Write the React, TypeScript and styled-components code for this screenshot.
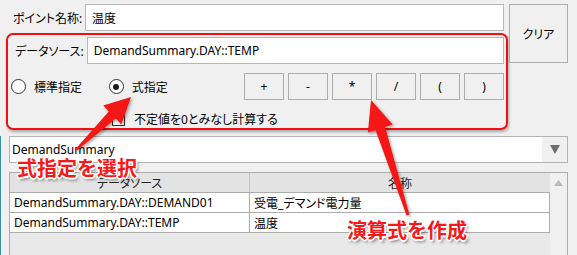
import React from "react";
import styled, { createGlobalStyle } from "styled-components";

const GlobalStyle = createGlobalStyle`
  html, body {
    margin: 0;
    padding: 0;
    background: #f0f0f0;
  }
`;

const UI_FONT = `"Noto Sans", "Noto Sans CJK JP", sans-serif`;

const rows = [
  { source: "DemandSummary.DAY::DEMAND01", name: "受電_デマンド電力量" },
  { source: "DemandSummary.DAY::TEMP", name: "温度" },
];

const operators = ["+", "-", "*", "/", "(", ")"];

const App: React.FC = () => {
  return (
    <Page>
      <GlobalStyle />

      <TopArea>
        <LeftColumn>
          <FieldRow>
            <Label>ポイント名称:</Label>
            <TextBox>温度</TextBox>
          </FieldRow>

          <GroupBox>
            <FieldRow>
              <Label>データソース:</Label>
              <TextBox>DemandSummary.DAY::TEMP</TextBox>
            </FieldRow>

            <RadioRow>
              <RadioItem width={99}>
                <RadioCircle checked={false} />
                <span>標準指定</span>
              </RadioItem>
              <RadioItem width={137}>
                <RadioCircle checked />
                <span>式指定</span>
              </RadioItem>
              <OpButtons>
                {operators.map((op) => (
                  <OpButton key={op}>{op}</OpButton>
                ))}
              </OpButtons>
            </RadioRow>

            <CheckRow>
              <CheckBox />
              <span>不定値を0とみなし計算する</span>
            </CheckRow>
          </GroupBox>
        </LeftColumn>

        <ClearButton>クリア</ClearButton>
      </TopArea>

      <LowerArea>
        <Combo>
          <ComboText>DemandSummary</ComboText>
          <ComboArrow>
            <svg width="10" height="9" viewBox="0 0 10 9">
              <polygon points="0,0 10,0 5,9" fill="#6d6d6d" />
            </svg>
          </ComboArrow>
        </Combo>

        <Grid>
          <GridBody>
            <HeaderRow>
              <HeaderCell>データソース</HeaderCell>
              <HeaderCell>名称</HeaderCell>
            </HeaderRow>
            {rows.map((r) => (
              <DataRow key={r.source}>
                <Cell>{r.source}</Cell>
                <Cell>{r.name}</Cell>
              </DataRow>
            ))}
          </GridBody>
          <ScrollBar>
            <svg width="9" height="6" viewBox="0 0 9 6">
              <polygon points="0,6 9,6 4.5,0" fill="#b9b9b9" />
            </svg>
          </ScrollBar>
        </Grid>
      </LowerArea>

      {/* annotation overlay */}
      <Overlay width="577" height="255" viewBox="0 0 577 255">
        <defs>
          <filter id="shadow" x="-20%" y="-20%" width="140%" height="140%">
            <feDropShadow dx="1.5" dy="1.5" stdDeviation="1.5" floodColor="#000" floodOpacity="0.35" />
          </filter>
        </defs>
        <polygon
          filter="url(#shadow)"
          fill="#f51515"
          points="76.7,150.7 115.8,118.6 121.3,124.4 131,97 103.3,105.6 108.8,111.4 75.3,149.3"
        />
        <polygon
          filter="url(#shadow)"
          fill="#f51515"
          points="409.4,214.5 385.1,127 392.7,124.5 371,100 367.9,132.5 375.5,130 406.6,215.5"
        />
      </Overlay>

      <Note left={17} top={154}>式指定を選択</Note>
      <Note left={347} top={216}>演算式を作成</Note>
    </Page>
  );
};

/* ================== STYLED COMPONENTS ================== */

const Page = styled.div`
  position: relative;
  width: 577px;
  height: 255px;
  overflow: hidden;
  background: #f0f0f0;
  font-family: ${UI_FONT};
  font-size: 12px;
  color: #000;
`;

const TopArea = styled.div`
  display: flex;
  align-items: flex-start;
  padding: 4px 9px 0 6px;
`;

const LeftColumn = styled.div`
  width: 502px;
  display: flex;
  flex-direction: column;
`;

const FieldRow = styled.div`
  display: flex;
  align-items: center;
  height: 27px;
  padding-left: 7px;
`;

const Label = styled.div`
  width: 72px;
  font-size: 12px;
  font-feature-settings: "palt";
  white-space: nowrap;
`;

const TextBox = styled.div`
  box-sizing: border-box;
  width: 419px;
  height: 27px;
  border: 1px solid #b8b8b8;
  background: #fff;
  padding: 0 6px;
  display: flex;
  align-items: center;
  font-size: 12px;
`;

const GroupBox = styled.div`
  box-sizing: border-box;
  margin-top: 2px;
  height: 97px;
  border: 2px solid #f20f0f;
  border-radius: 7px;
  padding: 2px 2px 0 0;
  box-shadow: 1px 2px 3px rgba(0, 0, 0, 0.3);
`;

const RadioRow = styled.div`
  display: flex;
  align-items: center;
  margin-top: 9px;
  height: 27px;
  padding-left: 3px;
`;

const RadioItem = styled.div<{ width: number }>`
  display: flex;
  align-items: center;
  gap: 8px;
  width: ${({ width }) => width}px;
  font-size: 12px;
  font-feature-settings: "palt";
`;

const RadioCircle = styled.div<{ checked: boolean }>`
  box-sizing: border-box;
  width: 15px;
  height: 15px;
  border-radius: 50%;
  border: 1px solid #333;
  background: #fff;
  display: flex;
  align-items: center;
  justify-content: center;

  &::after {
    content: "";
    width: 6px;
    height: 6px;
    border-radius: 50%;
    background: #1a1a1a;
    display: ${({ checked }) => (checked ? "block" : "none")};
  }
`;

const OpButtons = styled.div`
  display: flex;
  gap: 4px;
`;

const OpButton = styled.div`
  box-sizing: border-box;
  width: 40px;
  height: 27px;
  border: 1px solid #adadad;
  background: #f0f0f0;
  display: flex;
  align-items: center;
  justify-content: center;
  font-size: 12px;
`;

const CheckRow = styled.div`
  display: flex;
  align-items: center;
  gap: 9px;
  margin-top: 10px;
  padding-left: 104px;
  font-size: 12px;
  font-feature-settings: "palt";
`;

const CheckBox = styled.div`
  box-sizing: border-box;
  width: 13px;
  height: 13px;
  border: 1px solid #333;
  background: #fff;
`;

const ClearButton = styled.div`
  box-sizing: border-box;
  margin-left: 1px;
  width: 59px;
  height: 59px;
  border: 1px solid #adadad;
  background: #f0f0f0;
  display: flex;
  align-items: center;
  justify-content: center;
  font-size: 12px;
  font-feature-settings: "palt";
`;

const LowerArea = styled.div`
  box-sizing: border-box;
  margin-top: 6px;
  height: 122px;
  padding: 0 9px 0 8px;
  display: flex;
  flex-direction: column;
  gap: 9px;
  border-left: 1px solid #3d93a8;
`;

const Combo = styled.div`
  box-sizing: border-box;
  display: flex;
  height: 27px;
  border: 1px solid #b4b4b4;
  background: #fff;
`;

const ComboText = styled.div`
  flex: 1;
  display: flex;
  align-items: center;
  padding-left: 2px;
  font-size: 12px;
`;

const ComboArrow = styled.div`
  width: 25px;
  background: #f0f0f0;
  display: flex;
  align-items: center;
  justify-content: center;
`;

const Grid = styled.div`
  box-sizing: border-box;
  flex: 1;
  display: flex;
  border: 1px solid #acacac;
  border-bottom: none;
  background: #e9e9e9;
`;

const GridBody = styled.div`
  flex: 1;
  display: flex;
  flex-direction: column;
`;

const HeaderRow = styled.div`
  display: grid;
  grid-template-columns: 239px 1fr;
  height: 19px;
  background: #e3e3e3;
  border-bottom: 1px solid #acacac;
`;

const HeaderCell = styled.div`
  display: flex;
  align-items: center;
  justify-content: center;
  font-size: 12px;
  font-feature-settings: "palt";
  color: #222;

  & + & {
    border-left: 1px solid #c4c4c4;
  }
`;

const DataRow = styled.div`
  display: grid;
  grid-template-columns: 239px 1fr;
  height: 19px;
  background: #fff;
  border-bottom: 1px solid #acacac;
  border-right: 1px solid #acacac;
`;

const Cell = styled.div`
  display: flex;
  align-items: center;
  padding-left: 4px;
  font-size: 12px;
  font-feature-settings: "palt";

  & + & {
    border-left: 1px solid #acacac;
  }
`;

const ScrollBar = styled.div`
  width: 17px;
  background: #f0f0f0;
  display: flex;
  justify-content: center;
  padding-top: 7px;
  box-sizing: border-box;
`;

const Overlay = styled.svg`
  position: absolute;
  left: 0;
  top: 0;
  pointer-events: none;
`;

const Note = styled.div<{ left: number; top: number }>`
  position: absolute;
  left: ${({ left }) => left}px;
  top: ${({ top }) => top}px;
  font-family: "Noto Sans CJK JP", sans-serif;
  font-weight: 700;
  font-size: 20px;
  line-height: 28px;
  color: #f41a1a;
  white-space: nowrap;
  text-shadow:
    1.5px 0 0 #fff, -1.5px 0 0 #fff, 0 1.5px 0 #fff, 0 -1.5px 0 #fff,
    1px 1px 0 #fff, -1px -1px 0 #fff, 1px -1px 0 #fff, -1px 1px 0 #fff,
    2px 3px 3px rgba(0, 0, 0, 0.45);
`;

export default App;
